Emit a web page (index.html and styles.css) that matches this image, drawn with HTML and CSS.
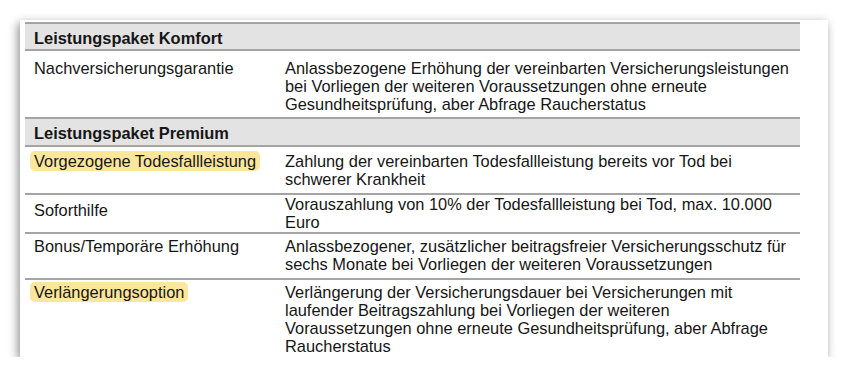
FILE: index.html
```html
<!DOCTYPE html>
<html lang="de">
<head>
<meta charset="utf-8">
<title>Leistungspakete</title>
<link rel="stylesheet" href="styles.css">
</head>
<body>
<div class="card">
  <table class="sheet">
    <colgroup><col class="c-left"><col class="c-right"></colgroup>
    <tr class="head h1">
      <th colspan="2">Leistungspaket Komfort</th>
    </tr>
    <tr class="row r1">
      <td>Nachversicherungsgarantie</td>
      <td>Anlassbezogene Erhöhung der vereinbarten Versicherungsleistungen<br>bei Vorliegen der weiteren Voraussetzungen ohne erneute<br>Gesundheitsprüfung, aber Abfrage Raucherstatus</td>
    </tr>
    <tr class="head h2">
      <th colspan="2">Leistungspaket Premium</th>
    </tr>
    <tr class="row r3">
      <td><span class="mark">Vorgezogene Todesfallleistung</span></td>
      <td>Zahlung der vereinbarten Todesfallleistung bereits vor Tod bei<br>schwerer Krankheit</td>
    </tr>
    <tr class="row r4">
      <td class="mid">Soforthilfe</td>
      <td>Vorauszahlung von 10% der Todesfallleistung bei Tod, max. 10.000<br>Euro</td>
    </tr>
    <tr class="row r5">
      <td>Bonus/Temporäre Erhöhung</td>
      <td>Anlassbezogener, zusätzlicher beitragsfreier Versicherungsschutz für<br>sechs Monate bei Vorliegen der weiteren Voraussetzungen</td>
    </tr>
    <tr class="row r6">
      <td><span class="mark">Verlängerungsoption</span></td>
      <td>Verlängerung der Versicherungsdauer bei Versicherungen mit<br>laufender Beitragszahlung bei Vorliegen der weiteren<br>Voraussetzungen ohne erneute Gesundheitsprüfung, aber Abfrage<br>Raucherstatus</td>
    </tr>
  </table>
</div>
</body>
</html>
```

FILE: styles.css
```css
html, body {
  margin: 0;
  padding: 0;
  background: #ffffff;
}
body {
  font-family: "Liberation Sans", Arial, sans-serif;
  font-size: 16.4px;
  line-height: 18px;
  color: #161616;
}
.card {
  margin: 20px 0 0 20px;
  width: 808px;
  height: 337px;
  box-sizing: border-box;
  padding: 2px 28px 0 5px;
  background: #ffffff;
  box-shadow: -2px 3px 9px rgba(0, 0, 0, 0.45);
  overflow: hidden;
}
.sheet {
  width: 775px;
  border-collapse: collapse;
  table-layout: fixed;
}
.c-left { width: 251px; }
.c-right { width: 524px; }
.sheet th, .sheet td {
  border-top: 2px solid #a4a4a4;
  padding: 0 0 0 9px;
  text-align: left;
  vertical-align: top;
  white-space: nowrap;
  box-sizing: border-box;
}
.sheet th {
  font-weight: bold;
  background: #e3e3e3;
}
.h1 th { height: 27px; padding-top: 5px; }
.h2 th { height: 28px; padding-top: 5px; }
.r1 td { height: 68px; padding-top: 8px; }
.r3 td { height: 48px; padding-top: 5px; }
.r4 td { height: 39px; padding-top: 0; }
.r4 td.mid { padding-top: 6px; }
.r5 td { height: 46px; padding-top: 3px; }
.r6 td { height: 79px; padding-top: 3px; }
.mark {
  background: #fbe79c;
  border-radius: 5px;
  padding: 1px 4px 1px 4px;
  margin-left: -4px;
}
```
